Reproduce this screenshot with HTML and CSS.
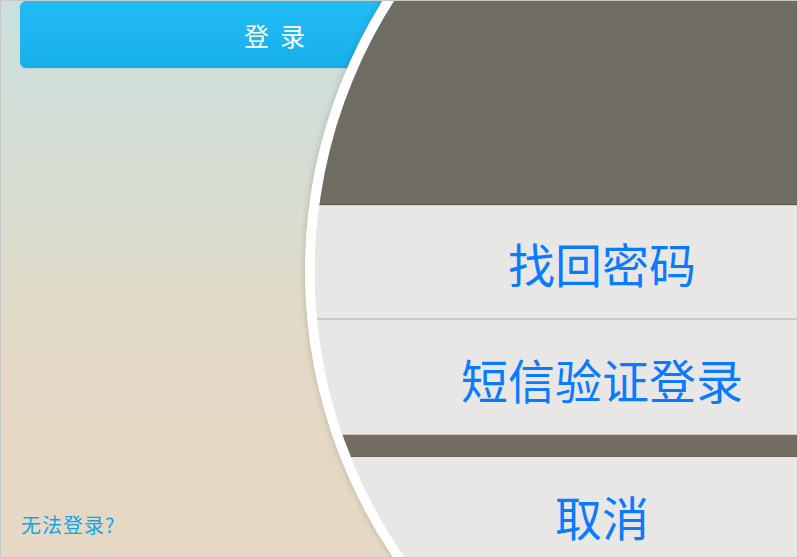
FILE: index.html
```html
<!DOCTYPE html>
<html lang="zh-CN">
<head>
<meta charset="utf-8">
<title>登录</title>
<link rel="stylesheet" href="styles.css">
</head>
<body>
<div class="frame">
  <div class="login">
    <button class="login-btn">登录</button>
    <a class="help-link" href="#">无法登录?</a>
  </div>
  <div class="lens">
    <div class="lens-inner">
      <div class="dim"></div>
      <div class="sheet-item first"><span class="label">找回密码</span></div>
      <div class="sheet-item second"><span class="label">短信验证登录</span></div>
      <div class="band"></div>
      <div class="sheet-item cancel"><span class="label">取消</span></div>
    </div>
  </div>
</div>
</body>
</html>
```
FILE: styles.css
```css
html, body {
  margin: 0;
  padding: 0;
}
body {
  font-family: "Noto Sans CJK SC", "Noto Sans", sans-serif;
  background: #ffffff;
}
.frame {
  position: relative;
  box-sizing: border-box;
  width: 798px;
  height: 558px;
  border: 1px solid #c9c9c9;
  overflow: hidden;
  background: linear-gradient(180deg, #c9e0dc 0%, #d3ddd4 25%, #dcdccc 45%, #e3d9c7 62%, #e6d8c4 100%);
}
.login {
  display: flex;
  flex-direction: column;
  justify-content: space-between;
  height: 100%;
}
.login-btn {
  margin: 0 0 0 19px;
  width: 512px;
  height: 67px;
  border: none;
  border-radius: 6px;
  background: linear-gradient(180deg, #20baf4 0%, #1cb5f0 60%, #16ade7 100%);
  color: #ffffff;
  font-family: "Noto Sans CJK SC", sans-serif;
  font-size: 25px;
  letter-spacing: 11px;
  padding: 0 0 0 8px;
  box-shadow: 0 1px 1px rgba(0, 0, 0, 0.06);
}
.help-link {
  margin: 0 0 22px 20px;
  font-size: 20px;
  line-height: 20px;
  letter-spacing: 1px;
  color: #18a4e4;
  text-decoration: none;
}
.lens {
  position: absolute;
  left: 304px;
  top: -240px;
  width: 1000px;
  height: 1000px;
  border: 10px solid #ffffff;
  border-radius: 50%;
  overflow: hidden;
  box-shadow: 0 0 6px rgba(60, 50, 40, 0.25);
}
.lens-inner {
  display: flex;
  flex-direction: column;
  height: 100%;
  background: #e8e7e5;
}
.dim {
  height: 433px;
  flex: none;
  background: #6f6c64;
  border-bottom: 1px solid #5e5b54;
}
.sheet-item {
  flex: none;
  display: flex;
  align-items: center;
  background: #e8e7e5;
  box-sizing: border-box;
}
.sheet-item.first {
  height: 115px;
  border-top: 1px solid #d3d0ca;
  border-bottom: 2px solid #c9c8c6;
  padding-top: 2px;
}
.sheet-item.second {
  height: 114px;
  padding-top: 4px;
}
.band {
  flex: none;
  height: 21px;
  background: #736c62;
  border-top: 1px solid #cdcac6;
  border-bottom: 1px solid #67615a;
}
.sheet-item.cancel {
  height: 118px;
}
.label {
  display: block;
  margin-left: 92px;
  width: 390px;
  text-align: center;
  font-size: 47px;
  line-height: 50px;
  color: #0a7bff;
}
```
